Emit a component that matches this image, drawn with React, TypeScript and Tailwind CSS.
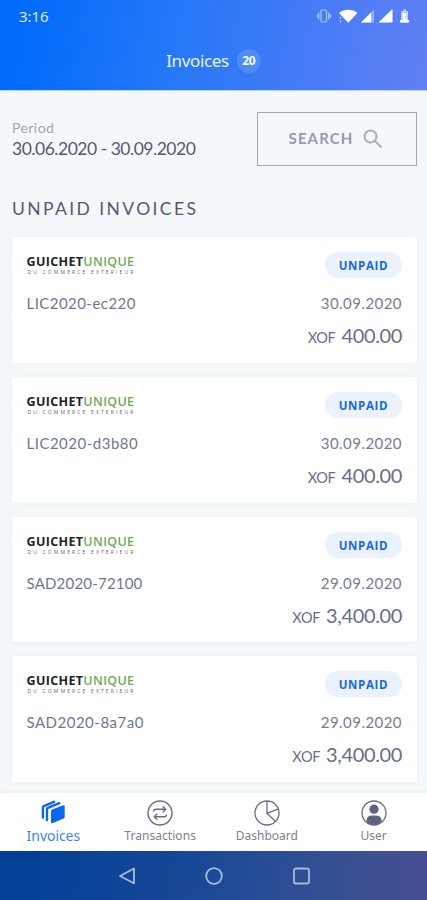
type Invoice = { id: string; date: string; amount: string; tracking: string };

const invoices: Invoice[] = [
  { id: "LIC2020-ec220", date: "30.09.2020", amount: "400.00", tracking: "tracking-[0.45px]" },
  { id: "LIC2020-d3b80", date: "30.09.2020", amount: "400.00", tracking: "tracking-[0.5px]" },
  { id: "SAD2020-72100", date: "29.09.2020", amount: "3,400.00", tracking: "tracking-[0.2px]" },
  { id: "SAD2020-8a7a0", date: "29.09.2020", amount: "3,400.00", tracking: "tracking-[0.5px]" },
];

function StatusBar() {
  return (
    <div className="flex h-8 items-center justify-between pl-[19px] pr-[16px]">
      <span className="font-['Noto_Sans',sans-serif] text-[15px] leading-5 tracking-[-0.1px] text-[#dceaff]">3:16</span>
      <svg width="94" height="16" viewBox="0 0 94 16" fill="none">
        <g stroke="#a9c8ff" strokeWidth="1.2">
          <rect x="4" y="2" width="5.5" height="12" rx="1" />
          <path d="M1.8 4.500v7M11.7 4.500v7M.3 6v4M13.4 6v4" />
        </g>
        <path d="M22 5C27 .8 35.500.8 40.500 5L31.200 14.800z" fill="#fff" />
        <path d="M23.500 9v2M23.500 12.500v2" stroke="#b9d2ff" strokeWidth="1.3" />
        <path d="M57 1.500v13H44z" fill="#91b4ff" />
        <path d="M54 4.500v10H44z" fill="#fff" />
        <path d="M75.500 1v13.500h-14z" fill="#fff" />
        <path d="M84 3h2V1.500h3V3h2v11.500h-7z" fill="#b9ccff" />
        <path d="M85.500 5h4v3.500H88v1.500h1.500v2H92v2.500h-9V12h3z" fill="#fff" />
      </svg>
    </div>
  );
}

function Logo() {
  return (
    <div className="w-[110px] whitespace-nowrap pt-[3px]">
      <div className="font-['Open_Sans',sans-serif] text-[12.5px] font-bold leading-[14px] tracking-[0.35px] text-[#222]">
        GUICHET<span className="font-semibold text-[#72aa50]">UNIQUE</span>
      </div>
      <div className="font-['Open_Sans',sans-serif] pl-px text-[5px] leading-[6px] tracking-[2.15px] text-[#666]">
        DU COMMERCE EXTERIEUR
      </div>
    </div>
  );
}

function InvoiceCard({ invoice }: { invoice: Invoice }) {
  return (
    <article className="flex h-[125.7px] justify-between rounded-[2px] bg-white px-[15px] pt-[15px] shadow-[0_0_5px_rgba(90,110,130,0.07)]">
      <div className="-ml-[0.5px] flex flex-col">
        <Logo />
        <div className={`mt-[16px] text-[15px] leading-[24px] text-[#70788d] ${invoice.tracking}`}>{invoice.id}</div>
      </div>
      <div className="flex flex-col items-end">
        <div className="flex h-[26px] w-[77px] items-center justify-center rounded-full bg-[#ebf2fe] pt-px font-['Open_Sans',sans-serif] text-[11.5px] font-bold tracking-[0.65px] text-[#1768e4]">
          UNPAID
        </div>
        <div className="mt-[13px] text-[15px] leading-[24px] tracking-[0.45px] text-[#777d8e]">{invoice.date}</div>
        <div className="mt-[6px] flex items-baseline gap-[6px] leading-[28px] text-[#686f84]">
          <span className="text-[14.5px] tracking-[-0.4px]">XOF</span>
          <span className="text-[20px] tracking-[-0.35px]">{invoice.amount}</span>
        </div>
      </div>
    </article>
  );
}

function InvoicesIcon() {
  return (
    <svg width="26" height="26" viewBox="0 0 26 26" fill="none">
      <path
        d="M2.900 17.500V7.600q0-1 .9-1.400L14 1.800M7 20V9.300q0-1 .9-1.400L19.300 3.200"
        stroke="#0b66f5"
        strokeWidth="2.4"
        strokeLinecap="round"
      />
      <path d="M11 11.200q0-1.200 1.100-1.700l11-4.200q1.600-.5 1.600 1v10.500q0 1.200-1.100 1.700L13 23q-2 .8-2-1z" fill="#0b66f5" />
    </svg>
  );
}

function TransactionsIcon() {
  return (
    <svg width="26" height="26" viewBox="0 0 26 26" fill="none" stroke="#686f84" strokeWidth="1.4">
      <circle cx="13" cy="13" r="12" />
      <path d="M6.500 11.500q0-2.300 2.300-2.300h9.700M15.700 6.200l3 3-3 3M19.500 14.500q0 2.300-2.300 2.300H7.500M10.300 13.800l-3 3 3 3" />
    </svg>
  );
}

function DashboardIcon() {
  return (
    <svg width="26" height="26" viewBox="0 0 26 26" fill="none" stroke="#686f84" strokeWidth="1.3">
      <circle cx="13" cy="13" r="12" />
      <path d="M13 1v12.300l11.500-4.500M13 13.300l8.500 8.200" />
    </svg>
  );
}

function UserIcon() {
  return (
    <svg width="26" height="26" viewBox="0 0 26 26" fill="none">
      <circle cx="13" cy="13" r="12" stroke="#686f84" strokeWidth="1.3" />
      <circle cx="13" cy="9.200" r="4.600" fill="#5b6582" />
      <path d="M5.300 21.500q.2-6 5.200-6h5q5 0 5.200 6Q17.500 25 13 25t-7.700-3.500z" fill="#5b6582" />
    </svg>
  );
}

const tabs = [
  { label: "Invoices", Icon: InvoicesIcon, style: "text-[14px] tracking-[-0.05px] text-[#3c82f3]" },
  { label: "Transactions", Icon: TransactionsIcon, style: "text-[12px] tracking-[0.05px] text-[#7c8190]" },
  { label: "Dashboard", Icon: DashboardIcon, style: "text-[12px] text-[#7c8190]" },
  { label: "User", Icon: UserIcon, style: "text-[12px] text-[#7c8190]" },
];

export default function App() {
  return (
    <div className="flex h-[900px] w-[427px] flex-col overflow-hidden bg-[#f4f8fb] font-[Lato,sans-serif]">
      <header className="h-[91px] shrink-0 border-b border-[#b9d4fd] bg-[linear-gradient(100deg,#006bfb_5%,#2678f7_42%,#437af6_70%,#6281f3_100%)]">
        <StatusBar />
        <div className="flex items-center justify-center gap-2 pt-[16px]">
          <h1 className="font-['Noto_Sans',sans-serif] text-[17px] leading-[26px] tracking-[-0.35px] text-[#eaf2ff]">Invoices</h1>
          <span className="flex h-6 w-6 items-center justify-center rounded-full bg-[#4c8bf8] font-['Noto_Sans',sans-serif] text-[12px] font-bold tracking-[-0.2px] text-white">20</span>
        </div>
      </header>

      <main className="min-h-0 flex-1 overflow-hidden pl-[12px] pr-[10px]">
        <div className="flex items-start justify-between pt-[20.5px]">
          <div className="whitespace-nowrap pt-[7px]">
            <div className="-mt-px text-[14px] leading-[20px] tracking-[0.45px] text-[#a1a7b2]">Period</div>
            <div className="mt-px text-[17.5px] leading-[20px] tracking-[-0.48px] text-[#555a73]">30.06.2020 - 30.09.2020</div>
          </div>
          <button className="flex h-[54px] w-[160px] items-center justify-center gap-[10px] border border-[#9da7b4] pr-[12px] pl-[10px] text-[15px] font-bold tracking-[1.1px] text-[#929bb1]">
            SEARCH
            <svg width="20" height="20" viewBox="0 0 20 20" fill="none" stroke="#a9afba" strokeWidth="2">
              <circle cx="7.500" cy="7.500" r="6" />
              <path d="m12 12 6.500 6.500" />
            </svg>
          </button>
        </div>
        <h2 className="mt-[31px] text-[17.5px] leading-[24px] tracking-[2.4px] text-[#555a73]">UNPAID INVOICES</h2>
        <div className="mt-[16.9px] flex flex-col gap-[14px]">
          {invoices.map((invoice) => (
            <InvoiceCard key={invoice.id} invoice={invoice} />
          ))}
        </div>
      </main>

      <nav className="grid h-[58px] shrink-0 grid-cols-4 bg-white font-['Noto_Sans',sans-serif] shadow-[0_-1px_3px_rgba(80,100,120,0.08)]">
        {tabs.map(({ label, Icon, style }) => (
          <div key={label} className="flex flex-col items-center pt-[7px]">
            <Icon />
            <span className={`leading-[20px] ${style}`}>{label}</span>
          </div>
        ))}
      </nav>

      <footer className="h-[49px] shrink-0 bg-[linear-gradient(100deg,#024097_8%,#1b4997_48%,#335094_75%,#474f91_100%)] pl-[118px] pt-[16px]">
        <svg width="193" height="18" viewBox="0 0 193 18" fill="none" stroke="#a8bbdd" strokeWidth="1.8" strokeLinejoin="round">
          <path d="M2 9 16 1.500v14.800z" />
          <circle cx="96" cy="9" r="7.800" />
          <rect x="176" y="1.500" width="15" height="15" rx="2" />
        </svg>
      </footer>
    </div>
  );
}
